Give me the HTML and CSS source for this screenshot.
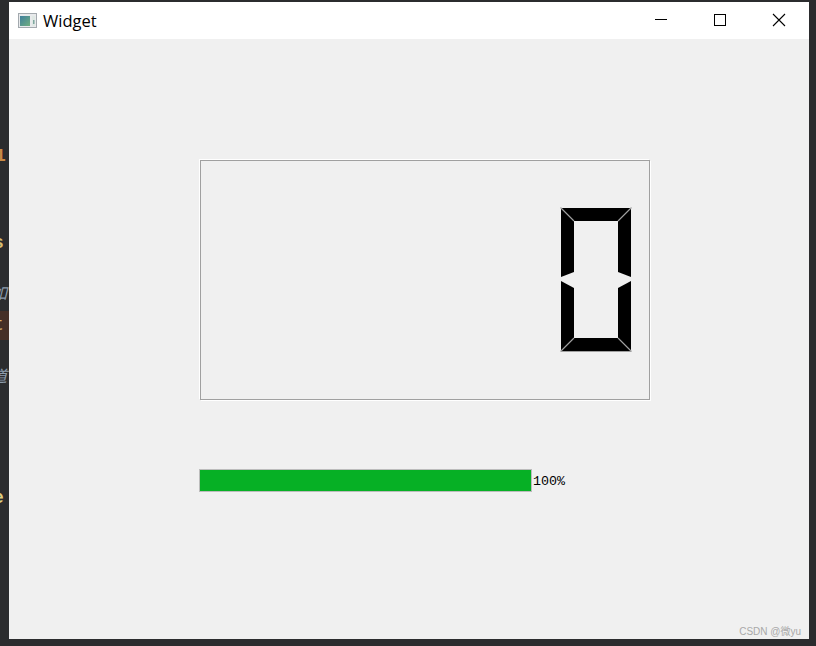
FILE: index.html
```html
<!DOCTYPE html>
<html lang="zh">
<head>
  <meta charset="UTF-8" />
  <title>Widget</title>
  <link rel="stylesheet" href="styles.css">
</head>
<body>
<div class="editor-edge">
  <span class="code code-num">1</span>
  <span class="code code-key">s</span>
  <span class="code code-note">如</span>
  <span class="code code-current">t</span>
  <span class="code code-note2">道</span>
  <span class="code code-end">e</span>
</div>

<div class="window">
  <div class="titlebar">
    <svg class="app-icon" width="19" height="15" viewBox="0 0 19 15">
      <defs>
        <linearGradient id="pane" x1="0" y1="0" x2="1" y2="1">
          <stop offset="0" stop-color="#3f7f9c"/>
          <stop offset="1" stop-color="#6fae80"/>
        </linearGradient>
      </defs>
      <rect x="0.5" y="0.5" width="18" height="14" fill="#e8eaec" stroke="#a3a9ae"/>
      <rect x="2" y="3" width="10" height="10" fill="url(#pane)"/>
      <rect x="14" y="3" width="3" height="10" fill="#dfe8e4"/>
      <rect x="15" y="7" width="1.5" height="4" fill="#7fa8a0"/>
    </svg>
    <span class="title">Widget</span>
    <div class="caption-btns">
      <svg class="caption-btn" width="58" height="37" viewBox="0 0 58 37">
        <path d="M23 17.5H35" stroke="#000" fill="none"/>
      </svg>
      <svg class="caption-btn" width="58" height="37" viewBox="0 0 58 37">
        <rect x="24.5" y="12.5" width="11" height="11" stroke="#000" fill="none"/>
      </svg>
      <svg class="caption-btn" width="58" height="37" viewBox="0 0 58 37">
        <path d="M25 12L37 24M37 12L25 24" stroke="#000" stroke-width="1.1" fill="none"/>
      </svg>
    </div>
  </div>

  <div class="client">
    <div class="lcd-frame">
      <svg class="lcd-digit" width="72" height="146" viewBox="0 0 72 146">
        <g fill="#000">
          <polygon points="1,1 71,1 58,14 14,14"/>
          <polygon points="1,1 14,14 14,65 1,70"/>
          <polygon points="71,1 58,14 58,65 71,70"/>
          <polygon points="1,74 14,81 14,131 1,144"/>
          <polygon points="71,74 58,81 58,131 71,144"/>
          <polygon points="14,131 58,131 71,144 1,144"/>
        </g>
        <path d="M0.5 0.5L14 14M71.5 0.5L58 14M14 131L0.5 144.5M58 131L71.5 144.5M0.5 144.5H71.5" stroke="#a0a0a0" stroke-width="1.2" fill="none"/>
      </svg>
    </div>

    <div class="progress-row">
      <div class="progress-bar"><div class="progress-fill"></div></div>
      <span class="progress-text">100%</span>
    </div>

    <span class="watermark">CSDN @微yu</span>
  </div>
</div>
</body>
</html>
```

FILE: styles.css
```css
* { box-sizing: border-box; }
html, body {
  margin: 0;
  width: 816px;
  height: 646px;
  overflow: hidden;
}
body {
  background: #2b2c2e;
  display: flex;
  align-items: flex-start;
}

/* bits of the code editor behind the window */
.editor-edge {
  width: 9px;
  height: 646px;
  flex: none;
  overflow: hidden;
  display: flex;
  flex-direction: column;
  align-items: flex-end;
  font-family: "Liberation Mono", monospace;
  font-size: 18px;
  line-height: 20px;
}
.code {
  display: block;
  width: 100%;
  white-space: nowrap;
  text-indent: -5px;
}
.code-num { margin-top: 146px; color: #c98a45; font-weight: bold; }
.code-key { margin-top: 67px; color: #d8bc70; font-weight: bold; text-indent: -7px; }
.code-note { margin-top: 29px; color: #8d9cab; font-style: italic; font-family: "Noto Sans CJK SC", sans-serif; font-size: 16px; text-indent: -9px; }
.code-current {
  margin-top: 9px;
  height: 29px;
  line-height: 29px;
  background: #452f27;
  color: #d8b070;
  text-indent: -7px;
}
.code-note2 { margin-top: 25px; color: #8d9cab; font-style: italic; font-family: "Noto Sans CJK SC", sans-serif; font-size: 16px; text-indent: -9px; }
.code-end { margin-top: 103px; color: #e0cf80; font-weight: bold; text-indent: -7px; }

.window {
  width: 800px;
  height: 637px;
  margin-top: 2px;
  flex: none;
  display: flex;
  flex-direction: column;
  background: #f0f0f0;
}
.titlebar {
  height: 37px;
  flex: none;
  background: #fff;
  display: flex;
  align-items: center;
  padding: 0 3px 0 9px;
}
.app-icon { flex: none; margin-top: -1px; }
.title {
  margin-left: 6px;
  font-family: "Open Sans", sans-serif;
  font-size: 16.5px;
  color: #000;
}
.caption-btns {
  margin-left: auto;
  display: flex;
}
.caption-btn { display: block; }

.client {
  flex: 1;
  position: relative;
  padding: 121px 0 0 191px;
}
.lcd-frame {
  width: 450px;
  height: 240px;
  border: 1px solid #a0a0a0;
  box-shadow: -1px -1px 0 #fff, 1px 1px 0 #fff;
  display: flex;
  align-items: center;
  justify-content: flex-end;
  padding-right: 17px;
}
.lcd-digit { display: block; }

.progress-row {
  display: flex;
  align-items: center;
  margin-top: 69px;
  margin-left: -1px;
}
.progress-bar {
  width: 333px;
  height: 23px;
  border: 1px solid #bcbcbc;
}
.progress-fill {
  width: 100%;
  height: 100%;
  background: #06b025;
}
.progress-text {
  margin: 2px 0 0 1px;
  font-family: "Liberation Mono", monospace;
  font-size: 13.33px;
  color: #000;
}
.watermark {
  position: absolute;
  right: 8px;
  bottom: 1px;
  font-family: "Liberation Sans", "Noto Sans CJK SC", sans-serif;
  font-size: 10px;
  color: #a9a9a9;
}
```
